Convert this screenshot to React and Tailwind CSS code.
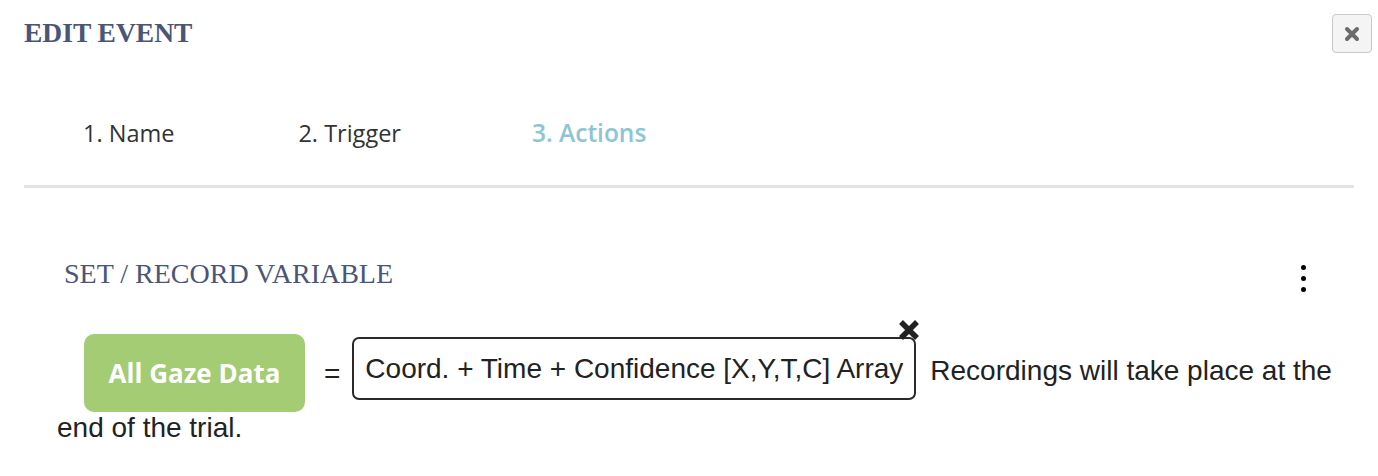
import React from 'react'

const serif = { fontFamily: '"Liberation Serif", "Times New Roman", serif' }

function CloseIcon() {
  return (
    <svg width="16" height="16" viewBox="0 0 16 16">
      <path d="M3 3 L13 13 M13 3 L3 13" stroke="#6b6b6b" strokeWidth="4" strokeLinecap="round" />
    </svg>
  )
}

function RemoveIcon() {
  return (
    <svg width="22" height="22" viewBox="0 0 22 22">
      <path d="M3 3 L19 19 M19 3 L3 19" stroke="#222" strokeWidth="5.5" strokeLinecap="butt" />
    </svg>
  )
}

export default function App() {
  const tabs = [
    { label: '1. Name', cls: 'pl-[59px]' },
    { label: '2. Trigger', cls: 'ml-[124px]' },
    { label: '3. Actions', cls: 'ml-[131px] text-[24.5px] font-semibold text-[#8dc5d5]' },
  ]

  return (
    <div className="w-[1378px] h-[476px] bg-white overflow-hidden">
      {/* Header */}
      <div className="flex items-start justify-between pl-6 pr-[6px] pt-[14px]">
        <h2
          className="mt-[3px] text-[27.5px] font-bold leading-[32px] text-[#4a5577]"
          style={serif}
        >
          EDIT EVENT
        </h2>
        <button className="flex h-[39px] w-[40px] items-center justify-center rounded-[4px] border border-[#c9c9c9] bg-[#f4f4f4]">
          <CloseIcon />
        </button>
      </div>

      {/* Steps */}
      <div className="mx-6 mt-[64px] border-b-[3px] border-[#e3e3e3] pb-[36px]">
        <div
          className="flex items-baseline text-[23.5px] leading-[32px] text-[#333]"
          style={{ fontFamily: '"Open Sans", sans-serif' }}
        >
          {tabs.map((t) => (
            <span key={t.label} className={t.cls}>
              {t.label}
            </span>
          ))}
        </div>
      </div>

      {/* Action */}
      <div className="mt-[67px] flex items-center justify-between pl-16 pr-[72px]">
        <h3 className="text-[28px] leading-[32px] text-[#4a5577]" style={serif}>
          SET / RECORD VARIABLE
        </h3>
        <div className="mt-[10px] flex flex-col gap-[6px]">
          <span className="h-[5px] w-[5px] rounded-full bg-black" />
          <span className="h-[5px] w-[5px] rounded-full bg-black" />
          <span className="h-[5px] w-[5px] rounded-full bg-black" />
        </div>
      </div>

      <div
        className="mt-[42px] w-[1340px] pl-[57px] text-[28px] leading-[31px] text-[#222]"
        style={{ fontFamily: '"Liberation Sans", Arial, sans-serif' }}
      >
        <span
          className="ml-[27px] inline-block h-[78px] w-[221px] rounded-[10px] bg-[#a3cc74] text-center align-middle text-[26px] font-bold leading-[78px] text-white"
          style={{ fontFamily: '"Open Sans", sans-serif' }}
        >
          All Gaze Data
        </span>
        <span className="ml-[19px] mr-[12px] inline-block align-middle">=</span>
        <span className="relative mb-[9px] inline-block rounded-[7px] border-2 border-[#2a2a2a] px-[11px] py-[14px] align-middle leading-[31px]">
          Coord. + Time + Confidence [X,Y,T,C] Array
          <span className="absolute -right-[6px] -top-[20px] leading-none">
            <RemoveIcon />
          </span>
        </span>
        <span className="ml-[14px]">Recordings will take place at the end of the trial.</span>
      </div>
    </div>
  )
}
